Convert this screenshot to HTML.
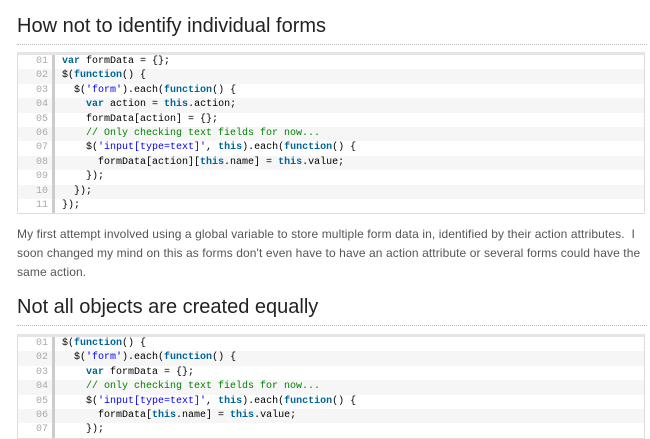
<!DOCTYPE html>
<html><head><style>
body{margin:0;background:#fff;width:650px;height:436px;overflow:hidden;font-family:"Liberation Sans",sans-serif;}
h2{position:absolute;left:17px;margin:0;font-weight:normal;font-size:20px;color:#222;width:630px;border-bottom:1px dotted #bbb;padding-bottom:6px;line-height:24px}
.code{position:absolute;left:17px;width:626px;border:1px solid #ddd;border-top:3px solid #e5e5e5;font-family:"Liberation Mono",monospace;font-size:10px;color:#000;}
.r{height:14.4px;line-height:14.4px;white-space:pre;}
.r:nth-child(even){background:#f6f6f6}
.n{display:inline-block;width:30px;text-align:right;color:#aaa;padding-right:4px;border-right:3px solid #ccc;margin-right:7px}
.k{color:#069;font-weight:bold}.s{color:#00f}.c{color:#008200}
p{position:absolute;left:17px;top:225px;margin:0;width:630px;font-size:12px;line-height:19px;color:#555;letter-spacing:0.1px}
</style></head><body>
<h2 style="top:14px">How not to identify individual forms</h2>
<div class="code" style="top:52px">
<div class="r"><span class="n">01</span><span class="k">var</span> formData = {};</div>
<div class="r"><span class="n">02</span>$(<span class="k">function</span>() {</div>
<div class="r"><span class="n">03</span>  $(<span class="s">'form'</span>).each(<span class="k">function</span>() {</div>
<div class="r"><span class="n">04</span>    <span class="k">var</span> action = <span class="k">this</span>.action;</div>
<div class="r"><span class="n">05</span>    formData[action] = {};</div>
<div class="r"><span class="n">06</span>    <span class="c">// Only checking text fields for now...</span></div>
<div class="r"><span class="n">07</span>    $(<span class="s">'input[type=text]'</span>, <span class="k">this</span>).each(<span class="k">function</span>() {</div>
<div class="r"><span class="n">08</span>      formData[action][<span class="k">this</span>.name] = <span class="k">this</span>.value;</div>
<div class="r"><span class="n">09</span>    });</div>
<div class="r"><span class="n">10</span>  });</div>
<div class="r"><span class="n">11</span>});</div>
</div>
<p>My first attempt involved using a global variable to store multiple form data in, identified by their action attributes.&nbsp; I soon changed my mind on this as forms don't even have to have an action attribute or several forms could have the same action.</p>
<h2 style="top:295px">Not all objects are created equally</h2>
<div class="code" style="top:334px">
<div class="r"><span class="n">01</span>$(<span class="k">function</span>() {</div>
<div class="r"><span class="n">02</span>  $(<span class="s">'form'</span>).each(<span class="k">function</span>() {</div>
<div class="r"><span class="n">03</span>    <span class="k">var</span> formData = {};</div>
<div class="r"><span class="n">04</span>    <span class="c">// only checking text fields for now...</span></div>
<div class="r"><span class="n">05</span>    $(<span class="s">'input[type=text]'</span>, <span class="k">this</span>).each(<span class="k">function</span>() {</div>
<div class="r"><span class="n">06</span>      formData[<span class="k">this</span>.name] = <span class="k">this</span>.value;</div>
<div class="r"><span class="n">07</span>    });</div>
</div>
</body></html>
